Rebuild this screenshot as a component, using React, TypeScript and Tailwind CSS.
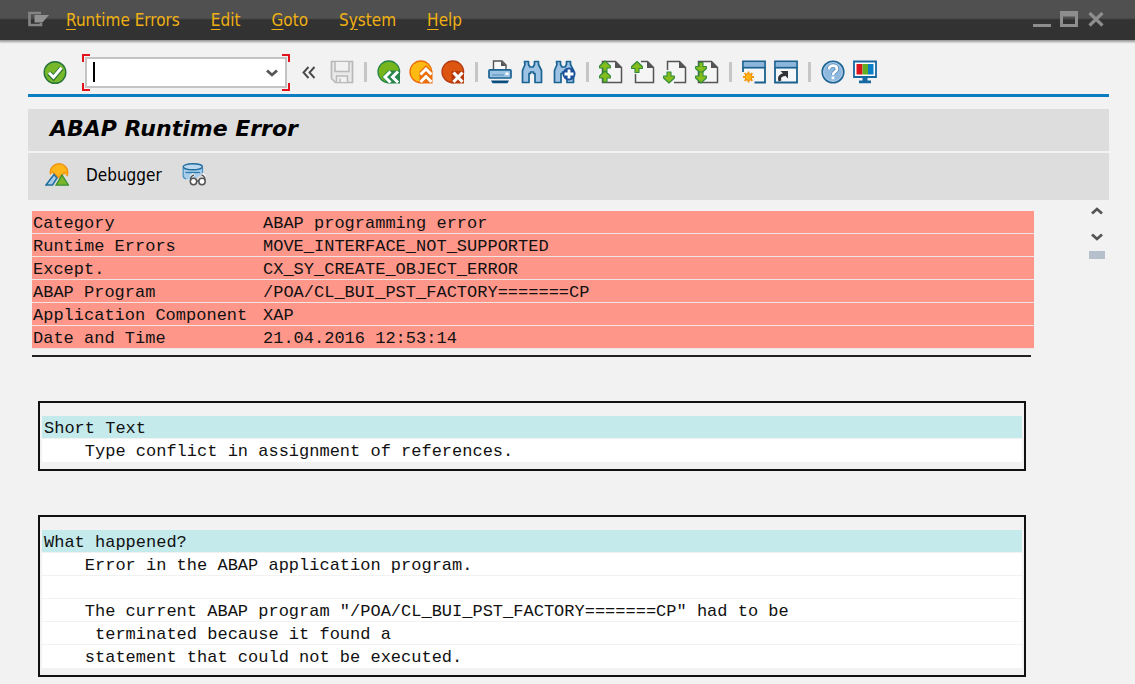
import React, { useState } from "react";
import type { ReactNode } from "react";

function Icon({ children }: { children: ReactNode }) {
  return (
    <svg viewBox="0 0 24 24" className="h-6 w-6" fill="none" aria-hidden="true">
      {children}
    </svg>
  );
}

function Tool({ label, children }: { label: string; children: ReactNode }) {
  return (
    <button type="button" aria-label={label} className="h-6 w-6 shrink-0">
      <Icon>{children}</Icon>
    </button>
  );
}

function Separator() {
  return <span className="mx-[2px] h-5 w-[3px] shrink-0 bg-[#c6c6c6]" />;
}

function Chevron({ up = false }: { up?: boolean }) {
  return (
    <svg viewBox="0 0 12 8" className="h-2 w-3" fill="none" aria-hidden="true">
      <path d={up ? "M1 6.600 6 2l5 4.600" : "M1 1.400 6 6l5-4.600"} stroke="#555" strokeWidth="2.700" />
    </svg>
  );
}

const PAGE = "M3.5 1.5h13l6 6v15h-19z";

function PageSheet({ d = PAGE }: { d?: string }) {
  return (
    <>
      <path d={d} fill="#f5f5f5" stroke="#555" strokeWidth="1.5" />
      <path d="M16 1v7h7z" fill="#555" />
    </>
  );
}

function Arrow({ x, y, down = false }: { x: number; y: number; down?: boolean }) {
  return (
    <path
      d={down ? "M-2 -5h4v4h3.400v2L0 6l-5.400-5v-2H-2z" : "M-2 5h4V1h3.400v-2L0 -6l-5.400 5v2H-2z"}
      transform={`translate(${x} ${y})`}
      fill="#84bd1c"
      stroke="#2f8a3a"
      strokeWidth="1.1"
      strokeLinejoin="round"
    />
  );
}

function BinocularShape() {
  return (
    <path
      d="M4.5 1.5h4v3l1.500 2.500h3l1.500-2.500v-3h4v3l3 6v12h-6.500v-9h-1.500v-1.500h-3v1.500h-1.500v9h-6.500v-12l2.500-6z"
      fill="#9fc3e4"
      stroke="#1a6392"
      strokeWidth="1.7"
      strokeLinejoin="round"
    />
  );
}

function WindowShape() {
  return (
    <>
      <path d="M1 1.500h22v21H1z" fill="#f4f7fa" stroke="#1a6190" strokeWidth="1.800" />
      <path d="M1.800 2.300h20.400v4.700H1.800z" fill="#8db5dc" />
      <path d="M1 7.700h22" stroke="#1a6190" strokeWidth="1.700" />
    </>
  );
}

const menus = [
  { before: "", key: "R", after: "untime Errors" },
  { before: "", key: "E", after: "dit" },
  { before: "", key: "G", after: "oto" },
  { before: "S", key: "y", after: "stem" },
  { before: "", key: "H", after: "elp" },
];

function TitleBar() {
  return (
    <header className="flex h-10 items-center justify-between bg-linear-to-b from-[#505050] from-45% to-[#323232] to-50% pr-[30px] pb-[2px] pl-[27px] shadow-[0_1px_2px_1px_#999]">
      <div className="flex items-center">
        <button type="button" aria-label="System menu" className="mr-[17px]">
          <svg viewBox="0 0 22 18" className="h-[18px] w-[22px]" fill="none" aria-hidden="true">
            <path d="M14 3H2.500v12H14v-2" stroke="#858585" strokeWidth="2.600" />
            <path d="M7.500 5H22l-6.500 7.500h-8z" fill="#929292" />
          </svg>
        </button>
        <nav className="flex gap-[31px] pt-[2px] font-['DejaVu_Sans_Condensed','Noto_Sans',sans-serif] text-[17px] leading-6 text-[#efb013]">
          {menus.map((m) => (
            <button type="button" key={m.key} className="whitespace-nowrap">
              {m.before}
              <span className="underline underline-offset-3">{m.key}</span>
              {m.after}
            </button>
          ))}
        </nav>
      </div>
      <div className="flex items-center gap-[9px] text-[#8d8d8d]">
        <button type="button" aria-label="Minimize">
          <svg viewBox="0 0 18 18" className="h-[18px] w-[18px]" aria-hidden="true">
            <path d="M0 14h18v3H0z" fill="currentColor" />
          </svg>
        </button>
        <button type="button" aria-label="Maximize">
          <svg viewBox="0 0 18 18" className="h-[18px] w-[18px]" aria-hidden="true">
            <path fillRule="evenodd" d="M0 1h18v16H0zM3 6.500v7.500h12V6.500z" fill="currentColor" />
          </svg>
        </button>
        <button type="button" aria-label="Close">
          <svg viewBox="0 0 18 18" className="h-[18px] w-[18px]" aria-hidden="true">
            <path d="M2.500 3l13 12.500M15.500 3l-13 12.500" stroke="currentColor" strokeWidth="3.200" />
          </svg>
        </button>
      </div>
    </header>
  );
}

function CommandField() {
  const [command, setCommand] = useState("");
  return (
    <div className="relative mr-[11px] ml-[15px] h-[37px] w-[208px] shrink-0 p-[3px]">
      <div className="flex h-full items-center border-2 border-[#c4c4c4] bg-white pr-[7px]">
        <input
          aria-label="Command"
          value={command}
          onChange={(e) => setCommand(e.target.value)}
          className="h-full min-w-0 flex-1 bg-transparent px-2 font-['Noto_Sans',sans-serif] text-base outline-none"
        />
        <button type="button" aria-label="Command history">
          <Chevron />
        </button>
      </div>
      {command === "" && <span className="pointer-events-none absolute top-2 left-[11px] h-5 w-[2px] bg-black" />}
      <span className="pointer-events-none absolute top-0 left-0 h-2 w-2 border-t-2 border-l-2 border-[#e2131b]" />
      <span className="pointer-events-none absolute top-0 right-0 h-2 w-2 border-t-2 border-r-2 border-[#e2131b]" />
      <span className="pointer-events-none absolute bottom-0 left-0 h-2 w-2 border-b-2 border-l-2 border-[#e2131b]" />
      <span className="pointer-events-none absolute right-0 bottom-0 h-2 w-2 border-r-2 border-b-2 border-[#e2131b]" />
    </div>
  );
}

function Toolbar() {
  return (
    <div className="mr-[26px] ml-7 border-b-3 border-[#0a7dc1] pt-[14px] pb-[3px] pl-[15px]">
      <div className="flex items-center">
        <Tool label="Enter">
          <circle cx="12" cy="11.500" r="10.800" fill="#76b82a" stroke="#27733c" strokeWidth="1.400" />
          <path d="M6 12l4.500 4.500 8-9.500" stroke="#276b35" strokeWidth="5" />
          <path d="M6 11.800l4.500 4.500 8-9.500" stroke="#fff" strokeWidth="3" />
        </Tool>
        <CommandField />
        <button type="button" aria-label="Collapse" className="mr-[13px] h-6 w-4">
          <svg viewBox="0 0 16 24" className="h-6 w-4" fill="none" aria-hidden="true">
            <path d="M7.500 6l-5 5.500 5 5.500M13.500 6l-5 5.500 5 5.500" stroke="#4a4a4a" strokeWidth="1.900" />
          </svg>
        </button>
        <div className="flex items-center gap-2 pb-[2px]">
          <Tool label="Save">
            <path d="M1.500 1.500h21v21H5.500l-4-4z" fill="#e9e9e9" stroke="#b9b9b9" strokeWidth="1.700" />
            <path d="M5 2v9.500h14V2M6.500 22v-6h11v6M10 18.500v4" fill="#f1f1f1" stroke="#b9b9b9" strokeWidth="1.500" />
          </Tool>
          <Separator />
          <Tool label="Back">
            <circle cx="11.800" cy="11.800" r="10.800" fill="#76b51c" stroke="#27854a" strokeWidth="1.300" />
            <path d="M5 17l6-6.500h12v13H11z" fill="#27854a" />
            <path d="M13.500 11.500L8 17l5.500 5.500M21 11.500L15.500 17l5.500 5.500" stroke="#fff" strokeWidth="3" />
          </Tool>
          <Tool label="Exit">
            <circle cx="11.800" cy="11.800" r="10.800" fill="#fdba12" stroke="#ec6c0a" strokeWidth="1.300" />
            <path d="M10.500 11.500L17 5l6.500 6.500v12h-13z" fill="#ec6c0a" />
            <path d="M11.500 14.500L17 9l5.500 5.500M11.500 22L17 16.500l5.500 5.500" stroke="#fff" strokeWidth="2.900" />
          </Tool>
          <Tool label="Cancel">
            <circle cx="11.800" cy="11.800" r="10.800" fill="#dc5611" stroke="#b53b13" strokeWidth="1.300" />
            <path d="M10.500 11h12.500v12.500H10.500z" fill="#b83a0c" />
            <path d="M12.500 12.500l9 9.500M21.500 12.500l-9 9.500" stroke="#fff" strokeWidth="3.200" />
          </Tool>
          <Separator />
          <Tool label="Print">
            <path d="M5.500 10V1h8.500l4 4v5" fill="#fafafa" stroke="#555" strokeWidth="1.400" />
            <path d="M13 1v5h5.500z" fill="#555" />
            <rect x="1" y="9.800" width="22" height="8.200" rx="1" fill="#9cc2e4" stroke="#1a6392" strokeWidth="1.700" />
            <path d="M4 15h12" stroke="#6c9fc8" strokeWidth="1.500" />
            <path d="M17.500 12.500h3v2.500h-3z" fill="#fff" />
            <path d="M3 20.500h18l-1.500 2.700h-15z" fill="#0c4d80" />
          </Tool>
          <Tool label="Find">
            <BinocularShape />
          </Tool>
          <Tool label="Find next">
            <BinocularShape />
            <circle cx="17" cy="14" r="6.500" fill="#1b4f9a" />
            <path d="M17 9.500v9M12.500 14h9" stroke="#fff" strokeWidth="2.800" />
          </Tool>
          <Separator />
          <Tool label="First page">
            <PageSheet />
            <Arrow x={6} y={7} />
            <Arrow x={6} y={17} />
          </Tool>
          <Tool label="Previous page">
            <PageSheet d="M10 1.500h6.500l6 6v15h-18V14" />
            <Arrow x={6} y={7.5} />
          </Tool>
          <Tool label="Next page">
            <PageSheet d="M4.500 10V1.500h12l6 6v15H11" />
            <Arrow x={6} y={17} down />
          </Tool>
          <Tool label="Last page">
            <PageSheet />
            <Arrow x={6} y={7.5} down />
            <Arrow x={6} y={17} down />
          </Tool>
          <Separator />
          <Tool label="New session">
            <WindowShape />
            <path d="M0 12h12.500v12H0z" fill="#f2f2f2" />
            <path
              d="M6.500 11.500v11M1 17h11M2.600 13.100l7.800 7.800M10.400 13.100l-7.800 7.800"
              stroke="#f29a0c"
              strokeWidth="1.800"
            />
            <circle cx="6.500" cy="17" r="3.500" fill="#fdb515" stroke="#f08c0c" />
          </Tool>
          <Tool label="Create shortcut">
            <WindowShape />
            <path d="M6 21c-1.500-4 .5-6 5-6.500" stroke="#333" strokeWidth="3" />
            <path d="M6.500 11H14v7.500z" fill="#333" />
          </Tool>
          <Separator />
          <Tool label="Help">
            <circle cx="12" cy="12" r="10.800" fill="#8fb8de" stroke="#1f6596" strokeWidth="1.600" />
            <circle cx="12" cy="12" r="9.300" stroke="#b5d0e9" strokeWidth=".8" />
            <path
              d="M8 9.500c0-2.500 1.700-3.900 4-3.900s4 1.300 4 3.300c0 3-4 3-4 6"
              stroke="#3f7fb1"
              strokeWidth="4"
            />
            <path d="M8 9.500c0-2.500 1.700-3.900 4-3.900s4 1.300 4 3.300c0 3-4 3-4 6M12 16.500v2.800" stroke="#fff" strokeWidth="2.700" />
          </Tool>
          <Tool label="Customize layout">
            <path d="M1 1.500h22v15.500H1z" fill="#fff" stroke="#1668a0" strokeWidth="1.800" />
            <path d="M3.500 4h6v10.500h-6z" fill="#d9141c" />
            <path d="M9.500 4h5.500v10.500H9.500z" fill="#62ae22" />
            <path d="M15 4h5.500v10.500H15z" fill="#0b7fc6" />
            <path d="M9.500 17.500h5v3H18v2.700H6v-2.700h3.500z" fill="#1668a0" />
          </Tool>
        </div>
      </div>
    </div>
  );
}

function ActionBar() {
  return (
    <div className="mt-[2px] flex h-[47px] items-center bg-[#dddddd] pb-1 pl-[17px]">
      <button type="button" aria-label="Overview" className="h-6 w-6">
        <Icon>
          <circle cx="14" cy="9.500" r="8.800" fill="#fdb51a" stroke="#f0930f" strokeWidth="1.400" />
          <path d="M3 13.500l5-4 5.500 5 5-4.500 5.500 5v8H3z" fill="#dddddd" />
          <path d="M7 8.500l6.500 6 7-5.500" stroke="#f0930f" strokeWidth="1.400" />
          <path d="M1 22l8-10.500 3 3.500-4.500 7z" fill="#a9cbe8" stroke="#1f6d9c" strokeWidth="1.500" />
          <path d="M11 22.200l6-10.200 6.500 10.200z" fill="#79b629" stroke="#3a8f37" strokeWidth="1.300" />
        </Icon>
      </button>
      <button type="button" className="ml-[17px] font-['DejaVu_Sans_Condensed','Noto_Sans',sans-serif] text-[17px] leading-6 text-black">
        Debugger
      </button>
      <button type="button" aria-label="Display data" className="ml-5 h-6 w-6">
        <Icon>
          <path d="M1 4v9c0 2 2 3.500 8 3.500h3L20 11V4z" fill="#a9cdea" />
          <path d="M1.200 4.500v8.500c0 1.500 1.500 2.500 3 3M20.500 4.500v6" stroke="#4e94c2" strokeWidth="1.300" />
          <ellipse cx="10.800" cy="3.800" rx="9.600" ry="3" fill="#bcd8ee" stroke="#1f6c9d" strokeWidth="1.400" />
          <path d="M3.500 9.500h14.500" stroke="#2d78a8" strokeWidth="1.300" />
          <path d="M9 14l3-3M23 14l-3-3" stroke="#fff" strokeWidth="3" />
          <circle cx="11.500" cy="18.500" r="3.200" fill="#fff" stroke="#555" strokeWidth="1.500" />
          <circle cx="20" cy="18.500" r="3.200" fill="#fff" stroke="#555" strokeWidth="1.500" />
          <path d="M8.500 17.500c0-3 1-5 3.500-5.500M23 17.500c0-3-1-5-3.500-5.500M14.500 18h2.500" stroke="#555" strokeWidth="1.300" />
        </Icon>
      </button>
    </div>
  );
}

const details: [string, string][] = [
  ["Category", "ABAP programming error"],
  ["Runtime Errors", "MOVE_INTERFACE_NOT_SUPPORTED"],
  ["Except.", "CX_SY_CREATE_OBJECT_ERROR"],
  ["ABAP Program", "/POA/CL_BUI_PST_FACTORY=======CP"],
  ["Application Component", "XAP"],
  ["Date and Time", "21.04.2016 12:53:14"],
];

function Section({ title, lines }: { title: string; lines: string[] }) {
  return (
    <section className="mr-2 ml-[6px] border-2 border-[#111] px-[2px] pt-[13px] pb-[7px]">
      <h2 className="border-b border-[#f2f2f2] bg-[#c5eaec] pt-1 pl-[2px] leading-[18px]">{title}</h2>
      <div className="divide-y divide-[#f2f2f2]">
        {lines.map((line, i) => (
          <p key={i} className="h-[23px] bg-white pt-1 pl-[2px] leading-[18px] whitespace-pre">
            {line}
          </p>
        ))}
      </div>
    </section>
  );
}

export default function App() {
  return (
    <div className="min-h-screen bg-[#f2f2f2]">
      <TitleBar />
      <Toolbar />
      <main className="mt-3 mr-[26px] ml-7">
        <h1 className="flex h-[42px] items-center bg-[#dddddd] pb-1 pl-[22px] font-['DejaVu_Sans',sans-serif] text-[22px] font-bold text-black italic">
          ABAP Runtime Error
        </h1>
        <ActionBar />
        <div className="flex justify-between pt-[11px] pl-1">
          <div className="min-w-0 flex-1 font-['Liberation_Mono',monospace] text-[17px] text-[#111]">
            <table className="w-full border-collapse">
              <tbody>
                {details.map(([name, value]) => (
                  <tr key={name} className="border-b border-[#f2e4e2] bg-[#ff968a] leading-[18px]">
                    <th scope="row" className="w-[230px] p-0 pt-1 pl-px text-left font-normal whitespace-nowrap">
                      {name}
                    </th>
                    <td className="p-0 pt-1 pl-px">{value}</td>
                  </tr>
                ))}
              </tbody>
            </table>
            <hr className="mt-[6px] mr-[3px] mb-11 border-t-2 border-[#222]" />
            <Section title="Short Text" lines={["    Type conflict in assignment of references."]} />
            <div className="h-11" />
            <Section
              title="What happened?"
              lines={[
                "    Error in the ABAP application program.",
                "",
                '    The current ABAP program "/POA/CL_BUI_PST_FACTORY=======CP" had to be',
                "     terminated because it found a",
                "    statement that could not be executed.",
              ]}
            />
          </div>
          <div className="mr-[2px] ml-[53px] flex w-5 flex-col items-center gap-[18px]">
            <button type="button" aria-label="Scroll up" className="-mt-1">
              <Chevron up />
            </button>
            <button type="button" aria-label="Scroll down">
              <Chevron />
            </button>
            <span className="-mt-2 h-2 w-4 bg-[#b5c0cc]" />
          </div>
        </div>
      </main>
    </div>
  );
}
